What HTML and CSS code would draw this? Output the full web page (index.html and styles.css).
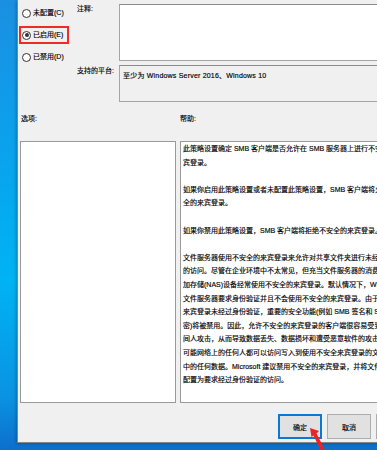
FILE: index.html
```html
<!DOCTYPE html>
<html lang="zh-CN">
<head>
    <meta charset="UTF-8">
    <title>启用不安全的来宾登录</title>
    <link rel="stylesheet" href="styles.css">
</head>
<body>
    <div class="desk">
        <div class="dialog">
            <div class="top">
                <div class="states">
                    <div class="state"><span class="radio"></span>未配置(C)</div>
                    <div class="state picked"><span class="radio on"></span>已启用(E)</div>
                    <div class="state"><span class="radio"></span>已禁用(D)</div>
                </div>
                <div class="fields">
                    <div class="field">
                        <span class="label">注释:</span>
                        <div class="comment"></div>
                    </div>
                    <div class="field">
                        <span class="label plat">支持的平台:</span>
                        <div class="platform">至少为 Windows Server 2016、Windows 10</div>
                    </div>
                </div>
            </div>

            <div class="heads">
                <span class="head-opt">选项:</span>
                <span>帮助:</span>
            </div>

            <div class="panes">
                <div class="options"></div>
                <div class="help">
                    <p>此策略设置确定 SMB 客户端是否允许在 SMB 服务器上进行不安全的来<br>宾登录。</p>
                    <p>如果你启用此策略设置或者未配置此策略设置，SMB 客户端将允许不安<br>全的来宾登录。</p>
                    <p>如果你禁用此策略设置，SMB 客户端将拒绝不安全的来宾登录。</p>
                    <p>文件服务器使用不安全的来宾登录来允许对共享文件夹进行未经身份验证<br>的访问。尽管在企业环境中不太常见，但充当文件服务器的消费类网络附<br>加存储(NAS)设备经常使用不安全的来宾登录。默认情况下，Windows SMB<br>文件服务器要求身份验证并且不会使用不安全的来宾登录。由于不安全的<br>来宾登录未经过身份验证，重要的安全功能(例如 SMB 签名和 SMB 加<br>密)将被禁用。因此，允许不安全的来宾登录的客户端很容易受到各种中<br>间人攻击，从而导致数据丢失、数据损坏和遭受恶意软件的攻击。此外，<br>可能网络上的任何人都可以访问写入到使用不安全来宾登录的文件服务器<br>中的任何数据。Microsoft 建议禁用不安全的来宾登录，并将文件服务器<br>配置为要求经过身份验证的访问。</p>
                </div>
            </div>

            <div class="buttons">
                <button class="btn default">确定</button>
                <button class="btn">取消</button>
                <button class="btn">应用(A)</button>
            </div>
        </div>

        <svg class="arrow" width="24" height="26" viewBox="0 0 24 26">
            <polygon points="0,0 9,3 6.5,5.5 17,26 12.5,26 3.5,7.5 1.5,9" fill="#e8232a"/>
        </svg>
    </div>
</body>
</html>
```

FILE: styles.css
```css
html, body {
    margin: 0;
    height: 100%;
    overflow: hidden;
}

body {
    font-family: 'Liberation Sans', 'Noto Sans CJK SC', sans-serif;
    font-size: 7px;
    color: #000;
    -webkit-text-stroke: 0.15px #000;
    background: linear-gradient(180deg, #1b8fe2 0%, #07a6ee 40%, #00b3f4 62%, #0a93e2 88%, #0d6fcb 100%);
}

.desk {
    position: relative;
    width: 377px;
    height: 450px;
}

.dialog {
    margin-left: 17px;
    width: 420px;
    height: 443px;
    background-color: #f0f0f0;
    border-left: 1px solid #858585;
    border-bottom: 1px solid #858585;
    box-sizing: border-box;
    box-shadow: -1px 1px 3px rgba(0, 0, 0, 0.25);
}

.top {
    display: flex;
}

.states {
    width: 59px;
    padding-top: 4px;
}

.state {
    display: flex;
    align-items: center;
    width: 50px;
    height: 18px;
    margin-left: 1px;
    margin-bottom: 4px;
    padding-left: 3px;
    gap: 2px;
    box-sizing: border-box;
    line-height: 10px;
}

.state.picked {
    outline: 2px solid #ee2a2a;
    outline-offset: -2px;
}

.radio {
    width: 9px;
    height: 9px;
    border: 1px solid #333;
    border-radius: 50%;
    background-color: #fff;
    box-sizing: border-box;
    position: relative;
}

.radio.on::after {
    content: "";
    position: absolute;
    left: 1.5px;
    top: 1.5px;
    width: 4px;
    height: 4px;
    border-radius: 50%;
    background-color: #333;
}

.fields {
    flex: 1;
    padding-top: 4px;
}

.field {
    display: flex;
    margin-bottom: 4px;
}

.label {
    width: 42px;
    line-height: 10px;
}

.label.plat {
    padding-top: 1px;
}

.comment {
    flex: 1;
    height: 57px;
    background-color: #fff;
    border: 1px solid #a5a5a5;
    border-top-color: #8a8a8a;
    box-sizing: border-box;
}

.platform {
    flex: 1;
    height: 37px;
    padding: 5px 3px 0;
    line-height: 10px;
    letter-spacing: 0.2px;
    border: 1px solid #a5a5a5;
    border-top-color: #8a8a8a;
    box-sizing: border-box;
}

.heads {
    display: flex;
    margin-top: 8px;
    padding-left: 3px;
    line-height: 10px;
}

.head-opt {
    width: 159px;
}

.panes {
    display: flex;
    gap: 4px;
    margin-top: 17px;
    padding-left: 2px;
}

.options {
    width: 156px;
    height: 262px;
    background-color: #fff;
    border: 1px solid #9a9a9a;
    box-sizing: border-box;
}

.help {
    flex: 1;
    height: 262px;
    padding: 0 2px;
    background-color: #fff;
    border: 1px solid #9a9a9a;
    box-sizing: border-box;
    white-space: nowrap;
    overflow: hidden;
    line-height: 13.6px;
}

.help p {
    margin: 0 0 13.6px;
}

.buttons {
    display: flex;
    gap: 5px;
    margin-top: 11px;
    padding-left: 260px;
}

.btn {
    width: 44px;
    height: 25px;
    padding: 0;
    font-family: inherit;
    font-size: 7px;
    color: #000;
    background-color: #e1e1e1;
    border: 1px solid #adadad;
    box-sizing: border-box;
}

.btn.default {
    border: 2px solid #0a78d6;
}

.arrow {
    position: absolute;
    left: 310px;
    top: 428px;
}
```
